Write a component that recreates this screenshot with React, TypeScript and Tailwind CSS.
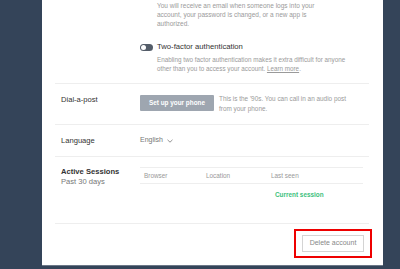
import React from "react";

function Sep() {
  return <div className="h-px bg-[#eeeeee]" />;
}

export default function App() {
  return (
    <div
      className="w-[400px] h-[269px] bg-[#344459] overflow-hidden"
      style={{ fontFamily: '"Liberation Sans", Arial, sans-serif' }}
    >
      <div className="ml-[42px] w-[341px] h-[265px] bg-white shadow-[0_1px_0_#6b7787] px-[13px] pr-[14px] flex flex-col">
        {/* Top security section */}
        <div className="flex h-[83px]">
          <div className="w-[85px]" />
          <div className="flex flex-col">
            <div className="ml-[17px] text-[6.5px] leading-[9px] text-[#9a9a9a] pt-[1px]">
              <div>You will receive an email when someone logs into your</div>
              <div>account, your password is changed, or a new app is</div>
              <div>authorized.</div>
            </div>
            <div className="flex items-center mt-[15px] h-[8px]">
              <div className="w-[13px] h-[7px] rounded-full bg-[#545d69] flex items-center pl-[1px]">
                <div className="w-[5px] h-[5px] rounded-full bg-white" />
              </div>
              <span className="ml-[4px] text-[7.7px] text-[#333]">Two-factor authentication</span>
            </div>
            <div className="ml-[17px] mt-[5px] text-[6.3px] leading-[8.5px] text-[#9a9a9a]">
              <div>Enabling two factor authentication makes it extra difficult for anyone</div>
              <div>
                other than you to access your account. <span className="underline">Learn more</span>.
              </div>
            </div>
          </div>
        </div>
        <Sep />
        {/* Dial-a-post */}
        <div className="flex h-[40px] pt-[11px]">
          <div className="w-[85px] pl-[6px] text-[7.6px] leading-[9px] text-[#333]">Dial-a-post</div>
          <div className="w-[74px] h-[16px] bg-[#9ea6b0] rounded-[1px] flex items-center justify-center text-white font-bold text-[6.4px]">
            Set up your phone
          </div>
          <div className="ml-[5px] text-[6.4px] leading-[9.5px] text-[#9a9a9a] -mt-[1px]">
            <div>This is the '90s. You can call in an audio post</div>
            <div>from your phone.</div>
          </div>
        </div>
        <Sep />
        {/* Language */}
        <div className="flex items-center h-[31px]">
          <div className="w-[85px] pl-[6px] text-[7.6px] text-[#333]">Language</div>
          <div className="flex items-center text-[7px] text-[#777]">
            English
            <svg className="ml-[4px]" width="6" height="4" viewBox="0 0 6 4">
              <path d="M0.5 0.8 L3 3.2 L5.5 0.8" fill="none" stroke="#888" strokeWidth="0.9" />
            </svg>
          </div>
        </div>
        <Sep />
        {/* Active sessions */}
        <div className="flex h-[66px] pt-[10px]">
          <div className="w-[85px] pl-[6px] text-[7.6px] leading-[10px] text-[#333]">
            <div className="font-bold">Active Sessions</div>
            <div className="text-[#777]">Past 30 days</div>
          </div>
          <div className="w-[223px] text-[6.4px]">
            <div className="h-[17px] border-y border-[#eeeeee] flex items-center text-[#999]">
              <div className="w-[66px] pl-[4px]">Browser</div>
              <div className="w-[65px]">Location</div>
              <div>Last seen</div>
            </div>
            <div className="h-[21px] flex items-center">
              <div className="w-[135px]" />
              <div className="font-bold text-[#3cbf7c]">Current session</div>
            </div>
          </div>
        </div>
        <Sep />
        {/* Delete */}
        <div className="flex justify-end pt-[5px]">
          <div className="mr-[-3px] border-2 border-[#ee0000] w-[78px] h-[29px] flex items-center justify-center">
            <div className="w-[62px] h-[17px] border border-[#d4d4d4] flex items-center justify-center text-[7px] text-[#888]">
              Delete account
            </div>
          </div>
        </div>
      </div>
    </div>
  );
}
